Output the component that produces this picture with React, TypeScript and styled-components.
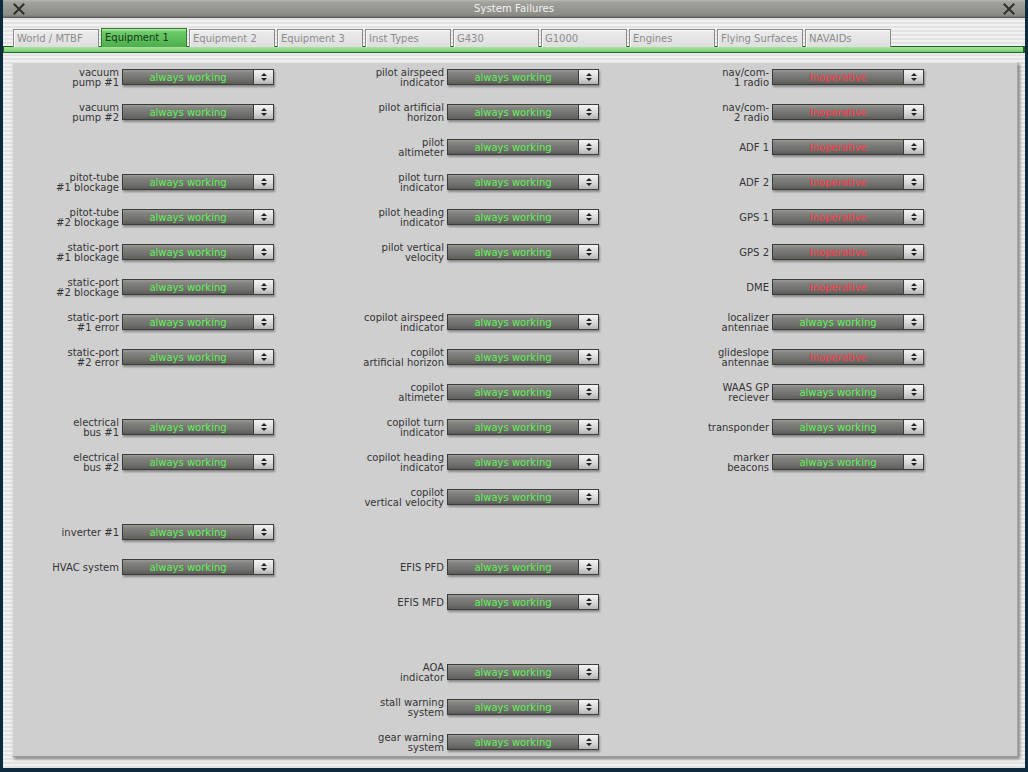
import React from 'react';
import styled, { createGlobalStyle } from 'styled-components';

const GlobalStyle = createGlobalStyle`
  html, body {
    margin: 0;
    padding: 0;
    background: #0c2a3e;
  }
  body {
    font-family: 'DejaVu Sans', 'Liberation Sans', sans-serif;
    font-size: 10px;
  }
`;

const Window = styled.div`
  width: 1022px;
  height: 768px;
  margin-left: 3px;
  display: flex;
  flex-direction: column;
  background: repeating-linear-gradient(
    to bottom,
    #f2f2f2 0px,
    #f2f2f2 2px,
    #e2e2e2 2px,
    #e2e2e2 4px
  );
`;

const TitleBar = styled.div`
  height: 17px;
  display: flex;
  align-items: center;
  padding: 0 10px;
  background: linear-gradient(to bottom, #b9b9b4 0px, #a2a29d 2px, #8c8c87 15px, #6e6e6a 17px);
  border-bottom: 1px solid #5c5c58;
`;

const Title = styled.div`
  flex: 1;
  text-align: center;
  color: #f2f2f2;
  font-size: 10px;
  letter-spacing: 0.1px;
`;

const CloseButton = styled.div`
  width: 12px;
  height: 12px;
  display: flex;
  align-items: center;
  justify-content: center;
`;

const TabStrip = styled.div`
  display: flex;
  gap: 2px;
  padding: 11px 0 0 10px;
  margin-bottom: -1px;
  position: relative;
  z-index: 1;
`;

const Tab = styled.div<{ $active?: boolean }>`
  width: 86px;
  box-sizing: border-box;
  padding: 3px 0 0 3px;
  font-size: 10px;
  white-space: nowrap;
  overflow: hidden;
  color: ${(p) => (p.$active ? '#14381a' : '#8c8c8c')};
  background: ${(p) =>
    p.$active
      ? 'linear-gradient(to bottom, #b6eab0 0px, #6ccb68 3px, #4eae4c 100%)'
      : 'linear-gradient(to bottom, #ececec, #dedede)'};
  border: 1px solid ${(p) => (p.$active ? '#2f7a2f' : '#8a8a8a')};
  border-bottom: none;
  margin-top: ${(p) => (p.$active ? '-1px' : '0')};
  height: ${(p) => (p.$active ? '19px' : '18px')};
  box-shadow: ${(p) => (p.$active ? 'none' : 'inset 1px 1px 0 #fafafa')};
`;

const GreenBar = styled.div`
  height: 5px;
  background: linear-gradient(to bottom, #a6e4a0, #7acf74);
  border: 1px solid #1f5f20;
  border-right-width: 2px;
`;

const Panel = styled.div`
  flex: 1;
  margin: 9px 7px 11px 9px;
  background: #cfcfcf;
  border-top: 1px solid #e6e6e6;
  border-left: 1px solid #e0e0e0;
  border-bottom: 1px solid #9a9a9a;
  border-right: 1px solid #a6a6a6;
  box-shadow: 2px 2px 3px rgba(0, 0, 0, 0.45);
  display: grid;
  grid-template-columns: repeat(3, 255px);
  column-gap: 70px;
  align-content: start;
  padding: 4px 0 0 6px;
`;

const Column = styled.div`
  display: flex;
  flex-direction: column;
  gap: 15px;
`;

const Row = styled.div`
  height: 20px;
  display: grid;
  grid-template-columns: 100px 152px;
  grid-template-rows: 20px;
  column-gap: 3px;
  align-items: center;
`;

const Label = styled.div`
  text-align: right;
  color: #343434;
  font-size: 10px;
  line-height: 10px;
  margin-top: 1px;
  margin-bottom: -1px;
  white-space: nowrap;
`;

const Select = styled.div`
  height: 16px;
  box-sizing: border-box;
  display: flex;
  border: 1px solid #3c3c3a;
  box-shadow: 1px 2px 2px rgba(0, 0, 0, 0.35);
`;

const SelectValue = styled.div<{ $bad?: boolean }>`
  flex: 1;
  display: flex;
  align-items: center;
  justify-content: center;
  font-size: 10px;
  color: ${(p) => (p.$bad ? '#ff3b4a' : '#62f25a')};
  background: linear-gradient(to bottom, #9a9a96 0px, #82827e 3px, #6e6e6a 10px, #5c5c58 100%);
`;

const SelectArrow = styled.div`
  width: 19px;
  display: flex;
  align-items: center;
  justify-content: center;
  border-left: 1px solid #3c3c3a;
  background: linear-gradient(to bottom, #f4f4f4, #d6d6d6 60%, #b4b4b4);
`;

const CloseIcon = () => (
  <svg width="12" height="12" viewBox="0 0 12 12">
    <path d="M1.5 1.5 L10.5 10.5 M10.5 1.5 L1.5 10.5" stroke="#2e2e2c" strokeWidth="2" strokeLinecap="square" />
  </svg>
);

const UpDown = () => (
  <svg width="6" height="8" viewBox="0 0 6 8">
    <path d="M3 0 L6 3 L0 3 Z M0 5 L6 5 L3 8 Z" fill="#222" />
  </svg>
);

type Item = { label?: string[]; bad?: boolean } | null;

const tabs = [
  'World / MTBF',
  'Equipment 1',
  'Equipment 2',
  'Equipment 3',
  'Inst Types',
  'G430',
  'G1000',
  'Engines',
  'Flying Surfaces',
  'NAVAIDs',
];

const L = (...label: string[]): Item => ({ label });
const X = (...label: string[]): Item => ({ label, bad: true });

const columns: Item[][] = [
  [
    L('vacuum', 'pump #1'),
    L('vacuum', 'pump #2'),
    null,
    L('pitot-tube', '#1 blockage'),
    L('pitot-tube', '#2 blockage'),
    L('static-port', '#1 blockage'),
    L('static-port', '#2 blockage'),
    L('static-port', '#1 error'),
    L('static-port', '#2 error'),
    null,
    L('electrical', 'bus #1'),
    L('electrical', 'bus #2'),
    null,
    L('inverter #1'),
    L('HVAC system'),
  ],
  [
    L('pilot airspeed', 'indicator'),
    L('pilot artificial', 'horizon'),
    L('pilot', 'altimeter'),
    L('pilot turn', 'indicator'),
    L('pilot heading', 'indicator'),
    L('pilot vertical', 'velocity'),
    null,
    L('copilot airspeed', 'indicator'),
    L('copilot', 'artificial horizon'),
    L('copilot', 'altimeter'),
    L('copilot turn', 'indicator'),
    L('copilot heading', 'indicator'),
    L('copilot', 'vertical velocity'),
    null,
    L('EFIS PFD'),
    L('EFIS MFD'),
    null,
    L('AOA', 'indicator'),
    L('stall warning', 'system'),
    L('gear warning', 'system'),
  ],
  [
    X('nav/com-', '1 radio'),
    X('nav/com-', '2 radio'),
    X('ADF 1'),
    X('ADF 2'),
    X('GPS 1'),
    X('GPS 2'),
    X('DME'),
    L('localizer', 'antennae'),
    X('glideslope', 'antennae'),
    L('WAAS GP', 'reciever'),
    L('transponder'),
    L('marker', 'beacons'),
  ],
];

const FailureRow: React.FC<{ item: Item }> = ({ item }) => {
  if (!item) return <Row />;
  return (
    <Row>
      <Label>
        {item.label?.map((line, i) => (
          <div key={i}>{line}</div>
        ))}
      </Label>
      <Select>
        <SelectValue $bad={item.bad}>{item.bad ? 'Inoperative' : 'always working'}</SelectValue>
        <SelectArrow>
          <UpDown />
        </SelectArrow>
      </Select>
    </Row>
  );
};

const App: React.FC = () => {
  return (
    <>
      <GlobalStyle />
      <Window>
        <TitleBar>
          <CloseButton>
            <CloseIcon />
          </CloseButton>
          <Title>System Failures</Title>
          <CloseButton>
            <CloseIcon />
          </CloseButton>
        </TitleBar>
        <TabStrip>
          {tabs.map((t) => (
            <Tab key={t} $active={t === 'Equipment 1'}>
              {t}
            </Tab>
          ))}
        </TabStrip>
        <GreenBar />
        <Panel>
          {columns.map((col, ci) => (
            <Column key={ci}>
              {col.map((item, i) => (
                <FailureRow key={i} item={item} />
              ))}
            </Column>
          ))}
        </Panel>
      </Window>
    </>
  );
};

export default App;
